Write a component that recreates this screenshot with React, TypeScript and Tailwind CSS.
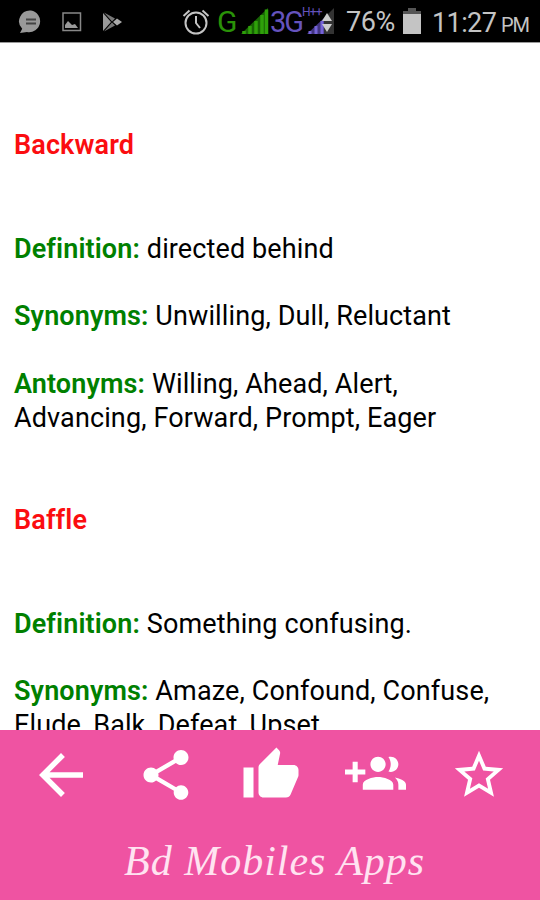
import { MdArrowBack, MdShare, MdThumbUp, MdStarBorder } from "react-icons/md";

const words = [
    {
        title: "Backward",
        definition: "directed behind",
        synonyms: ["Unwilling, Dull, Reluctant"],
        antonyms: ["Willing, Ahead, Alert,", "Advancing, Forward, Prompt, Eager"],
    },
    {
        title: "Baffle",
        definition: "Something confusing.",
        synonyms: ["Amaze, Confound, Confuse,", "Elude, Balk, Defeat, Upset"],
        antonyms: [],
    },
];

const Entry = ({ label, lines }: { label: string; lines: string[] }) => (
    <p className="mb-[33.75px] whitespace-nowrap">
        <span className="font-semibold text-[#008000]">{label}: </span>
        {lines.map((line, index) => <span key={index}>{index > 0 && <br />}{line}</span>)}
    </p>
);

const AlarmIcon = () => (
    <svg width="28" height="28" viewBox="0 0 28 28" fill="none" stroke="#c4c4c4" strokeWidth="2">
        <circle cx="14" cy="15" r="10.500" />
        <path d="M14 8v7l4 5M1.500 8 7.500 2.500M26.500 8 20.500 2.500" />
    </svg>
);

const StatusBar = () => (
    <header className="flex h-[43px] shrink-0 items-center border-b border-[#999] bg-black pt-[2px] font-[Roboto,sans-serif] text-[#c4c4c4]">
        <svg className="ml-[18px] shrink-0" width="26" height="26" viewBox="0 0 26 26">
            <path d="M13 1.500a11 10.800 0 1 1-4 21.500L2 24l2.200-4.200A11 10.800 0 0 1 13 1.500z" fill="#999" />
            <path d="M8 10.500h10M8 14.500h10" stroke="#444" strokeWidth="2" />
        </svg>
        <svg className="ml-[18px] shrink-0" width="20" height="20" viewBox="0 0 20 20">
            <path d="M1 1h17.500v17.500H1z" fill="none" stroke="#888" strokeWidth="1.500" />
            <path d="M3 16v-3l3-4 4 4 3-1 3 4z" fill="#999" />
        </svg>
        <svg className="ml-[20px] shrink-0" width="22" height="20" viewBox="0 0 22 20">
            <path d="M1 1v18l8-9z" fill="#999" />
            <path d="m2 .500 11 6-3 3zM2 19.500l11-6-3-3z" fill="#777" />
            <path d="m11 10 4-3.500 5 3.500-5 3.500z" fill="#aaa" />
        </svg>
        <span className="ml-[58px] shrink-0"><AlarmIcon /></span>
        <span className="ml-[7px] w-[22px] shrink-0 text-[30px] leading-[28px] tracking-[-1px] text-[#2a9208]">G</span>
        <svg className="ml-[2px] shrink-0" width="28" height="28" viewBox="0 0 28 28">
            <path d="M0 26 27 0v26z" fill="#176304" />
            <path d="M3 26v-3M9 26v-8M15 26V13M21 26V7M25.500 26V1.500" stroke="#2fa00a" strokeWidth="3.500" />
        </svg>
        <span className="flex w-[33px] shrink-0 pl-px text-[29px] leading-[28px] tracking-[-2px] text-[#6553bd]">3G</span>
        <span className="relative h-[28px] w-[32px] shrink-0">
            <span className="absolute left-0 top-[-2px] text-[12px] leading-none tracking-[-0.800px] text-[#6553bd]">H++</span>
            <svg className="absolute left-[5px] top-0" width="28" height="28" viewBox="0 0 28 28">
                <path d="M17 10 27 0v26H17z" fill="#333" />
                <path d="M0 26 17 10v16z" fill="#41347f" />
                <path d="M3 26v-3M9 26v-8M15 26V13" stroke="#7563d6" strokeWidth="3" />
                <path d="m20 5 5 8H15zM15 16h10l-5 8z" fill="#ccc" />
            </svg>
        </span>
        <span className="ml-[12px] w-[51px] shrink-0 whitespace-nowrap text-[27px] leading-[30px] tracking-[-0.400px]">76%</span>
        <svg className="ml-[5px] shrink-0" width="20" height="28" viewBox="0 0 20 28">
            <path d="M6 0h8v3h5v4H1V3h5z" fill="#555" />
            <path d="M1 6h18v20H1z" fill="#c4c4c4" />
        </svg>
        <span className="ml-[10px] w-[66px] shrink-0 whitespace-nowrap pt-px text-[27px] leading-[30px] tracking-[-0.600px]">11:27</span>
        <span className="ml-[3px] pt-[5px] text-[20px] leading-[22px] tracking-[-1px]">PM</span>
    </header>
);

const Toolbar = () => (
    <footer className="h-[170px] shrink-0 overflow-hidden bg-[#ef53a2] text-white">
        <div className="flex h-[89px] items-center">
            <MdArrowBack className="ml-[28px] shrink-0" size={66} />
            <MdShare className="ml-[42px] shrink-0" size={60} />
            <MdThumbUp className="ml-[45px] shrink-0" size={60} />
            <svg className="ml-[44px] shrink-0" width="61" height="61" viewBox="0 0 24 24" fill="currentColor">
                <path d="M8 10H5V7H3v3H0v2h3v3h2v-3h3v-2zm10 1c1.660 0 2.990-1.340 2.990-3S19.660 5 18 5c-.320 0-.630.050-.910.140.570.810.900 1.790.900 2.860s-.340 2.040-.900 2.860c.280.090.590.140.910.140zm-5 0c1.660 0 2.990-1.340 2.990-3S14.660 5 13 5c-1.660 0-3 1.340-3 3s1.340 3 3 3zm6.620 2.160c.830.730 1.380 1.660 1.380 2.840v2h3v-2c0-1.540-2.370-2.490-4.380-2.840zM13 13c-2 0-6 1-6 3v2h12v-2c0-2-4-3-6-3z" />
            </svg>
            <MdStarBorder className="ml-[44px] shrink-0" size={58} />
        </div>
        <div className="ml-[124px] mt-[22px] whitespace-nowrap font-['Monotype_Corsiva','Liberation_Serif',serif] text-[42px] italic leading-[40px] tracking-[1px] text-[#ffe3f1]">Bd Mobiles Apps</div>
    </footer>
);

export default function App() {
    return (
        <div className="flex h-[900px] w-[540px] flex-col overflow-hidden bg-white">
            <StatusBar />
            <main className="min-h-0 flex-1 overflow-hidden pl-[14px] pt-[85.500px] font-[Roboto,sans-serif] text-[27px] leading-[33.750px] tracking-[0.120px] text-black [font-variant-ligatures:none]">
                {words.map((word) =>
                    <section key={word.title} className="mb-[68.250px]">
                        <h2 className="mb-[70.500px] font-semibold text-[#fb0d10]">{word.title}</h2>
                        <Entry label="Definition" lines={[word.definition]} />
                        <Entry label="Synonyms" lines={word.synonyms} />
                        {word.antonyms.length > 0 && <Entry label="Antonyms" lines={word.antonyms} />}
                    </section>
                )}
            </main>
            <Toolbar />
        </div>
    );
}
